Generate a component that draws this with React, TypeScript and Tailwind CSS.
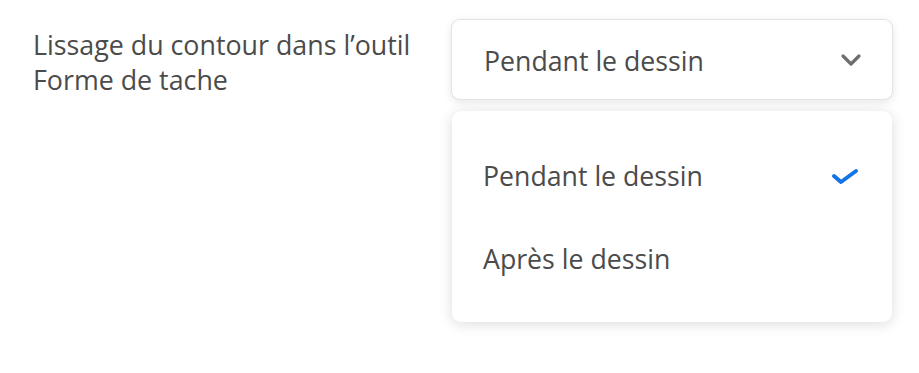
import React from "react";

export default function App() {
  return (
    <div className="w-[919px] h-[373px] bg-white flex gap-[40px] pl-[33px] pt-[27px]" style={{ fontFamily: '"Open Sans", sans-serif' }}>
      <div className="w-[385px] text-[26.8px] leading-[35px] text-[#4b4b4b]">
        Lissage du contour dans l’outil Forme de tache
      </div>
      <div className="flex flex-col gap-[11px] -mt-[8px] -ml-[7px]">
        <div className="w-[442px] h-[81px] rounded-[9px] border border-[#e3e3e3] bg-white shadow-[0_2px_8px_rgba(0,0,0,0.10)] flex items-center justify-between pl-[32px] pr-[30px] pt-[3px]">
          <span className="text-[26.7px] text-[#4b4b4b]">Pendant le dessin</span>
          <svg width="22" height="14" viewBox="0 0 22 14" className="-mt-[3px]">
            <path d="M3 3 L11 11 L19 3" fill="none" stroke="#6e6e6e" strokeWidth="3.2" strokeLinecap="round" strokeLinejoin="round" />
          </svg>
        </div>
        <div className="w-[440px] h-[211px] ml-[1px] rounded-[9px] bg-white shadow-[0_2px_14px_rgba(0,0,0,0.14)] flex flex-col pt-[24px] pl-[31px] pr-[33px]">
          <div className="h-[83px] flex items-center justify-between">
            <span className="text-[26.7px] text-[#4b4b4b]">Pendant le dessin</span>
            <svg width="28" height="20" viewBox="0 0 28 20" className="-mt-[2px]">
              <path d="M3 10 L10 16 L25 5" fill="none" stroke="#1473e6" strokeWidth="4" strokeLinecap="round" strokeLinejoin="round" />
            </svg>
          </div>
          <div className="h-[83px] flex items-center">
            <span className="text-[26.7px] text-[#4b4b4b]">Après le dessin</span>
          </div>
        </div>
      </div>
    </div>
  );
}
